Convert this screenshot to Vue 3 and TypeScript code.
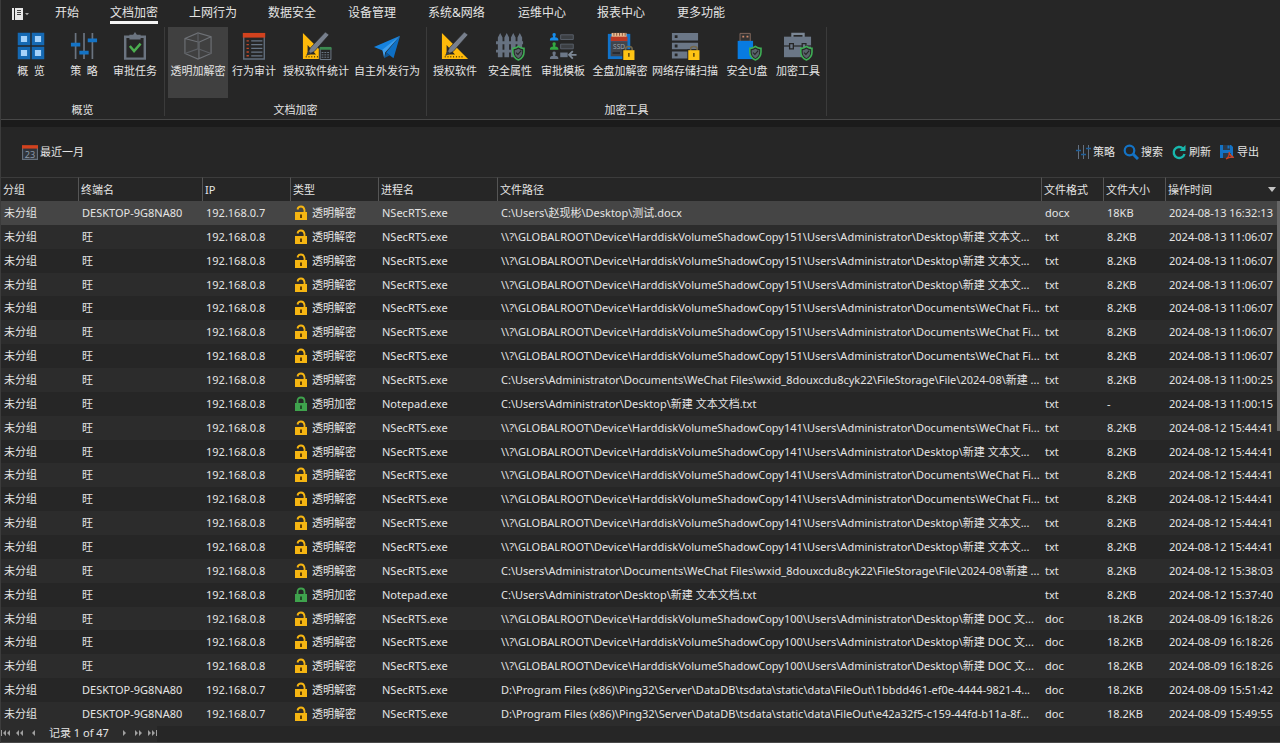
<script setup lang="ts">
import { ref } from 'vue'

interface Tool { label: string; icon: string }
interface Group { name: string; cls: string; tools: Tool[] }
interface Row {
  host: string
  ip: string
  locked: boolean
  proc: string
  path: string
  ext: string
  size: string
  time: string
}

const tabs = ['开始', '文档加密', '上网行为', '数据安全', '设备管理', '系统&网络', '运维中心', '报表中心', '更多功能']
const activeTab = ref('文档加密')
const activeTool = ref('透明加解密')
const selected = ref(0)

const groups: Group[] = [
  {
    name: '概览',
    cls: 'g-overview',
    tools: [
      { label: '概  览', icon: 'tiles' },
      { label: '策  略', icon: 'sliders' },
      { label: '审批任务', icon: 'clipboard' },
    ],
  },
  {
    name: '文档加密',
    cls: 'g-docs',
    tools: [
      { label: '透明加解密', icon: 'cube' },
      { label: '行为审计', icon: 'audit' },
      { label: '授权软件统计', icon: 'rulerStats' },
      { label: '自主外发行为', icon: 'plane' },
    ],
  },
  {
    name: '加密工具',
    cls: 'g-tools',
    tools: [
      { label: '授权软件', icon: 'ruler' },
      { label: '安全属性', icon: 'fence' },
      { label: '审批模板', icon: 'template' },
      { label: '全盘加解密', icon: 'ssd' },
      { label: '网络存储扫描', icon: 'server' },
      { label: '安全U盘', icon: 'usb' },
      { label: '加密工具', icon: 'briefcase' },
    ],
  },
]

const shadow = '\\\\?\\GLOBALROOT\\Device\\HarddiskVolumeShadowCopy'
const admin = '\\Users\\Administrator\\'
const desk = (n: number) => `${shadow}${n}${admin}Desktop\\新建 文本文...`
const chat = (n: number) => `${shadow}${n}${admin}Documents\\WeChat Fi...`
const docs = `${shadow}100${admin}Desktop\\新建 DOC 文...`
const storage = 'C:\\Users\\Administrator\\Documents\\WeChat Files\\wxid_8douxcdu8cyk22\\FileStorage\\File\\2024-08\\新建 ...'
const fileOut = 'D:\\Program Files (x86)\\Ping32\\Server\\DataDB\\tsdata\\static\\data\\FileOut\\'

const dec = (path: string, time: string, ext = 'txt', size = '8.2KB', host = '旺', ip = '192.168.0.8'): Row =>
  ({ host, ip, locked: false, proc: 'NSecRTS.exe', path, ext, size, time })
const enc = (time: string): Row => ({
  host: '旺', ip: '192.168.0.8', locked: true, proc: 'Notepad.exe',
  path: 'C:\\Users\\Administrator\\Desktop\\新建 文本文档.txt', ext: 'txt', size: '-', time,
})
const t1 = '2024-08-13 11:06:07'
const t2 = '2024-08-12 15:44:41'
const t3 = '2024-08-09 16:18:26'

const rows: Row[] = [
  dec('C:\\Users\\赵现彬\\Desktop\\测试.docx', '2024-08-13 16:32:13', 'docx', '18KB', 'DESKTOP-9G8NA80', '192.168.0.7'),
  dec(desk(151), t1),
  dec(desk(151), t1),
  dec(desk(151), t1),
  dec(chat(151), t1),
  dec(chat(151), t1),
  dec(chat(151), t1),
  dec(storage, '2024-08-13 11:00:25'),
  enc('2024-08-13 11:00:15'),
  dec(chat(141), t2),
  dec(desk(141), t2),
  dec(chat(141), t2),
  dec(chat(141), t2),
  dec(desk(141), t2),
  dec(desk(141), t2),
  dec(storage, '2024-08-12 15:38:03'),
  { ...enc('2024-08-12 15:37:40'), size: '8.2KB' },
  dec(docs, t3, 'doc', '18.2KB'),
  dec(docs, t3, 'doc', '18.2KB'),
  dec(docs, t3, 'doc', '18.2KB'),
  dec(fileOut + '1bbdd461-ef0e-4444-9821-4...', '2024-08-09 15:51:42', 'doc', '18.2KB', 'DESKTOP-9G8NA80', '192.168.0.7'),
  dec(fileOut + 'e42a32f5-c159-44fd-b11a-8f...', '2024-08-09 15:49:55', 'doc', '18.2KB', 'DESKTOP-9G8NA80', '192.168.0.7'),
]
</script>

<template>
  <div class="app">
    <nav class="menu">
      <button class="file" type="button" aria-label="菜单">
        <svg width="18" height="14" viewBox="0 0 18 14">
          <path d="M0 1h2v12H0z" fill="#e8e8e8" />
          <path d="M3 1h8v12H3z" fill="#e8e8e8" />
          <path d="M5 3.500h4M5 5.500h4M5 7.500h4" stroke="#444" />
          <path d="M13 6h4l-2 2.300z" fill="#aaa" />
        </svg>
      </button>
      <div class="tabs">
        <button v-for="t in tabs" :key="t" type="button" :class="{ on: t === activeTab }" @click="activeTab = t">{{ t }}</button>
      </div>
    </nav>

    <div class="ribbon">
      <section v-for="g in groups" :key="g.name" class="group" :class="g.cls">
        <div class="tools">
          <button v-for="k in g.tools" :key="k.label" class="tool" :class="{ on: k.label === activeTool }" type="button" @click="activeTool = k.label">
            <svg class="ico" viewBox="0 0 30 30" fill="none">
              <g v-if="k.icon === 'tiles'">
                <g fill="#a5d2fa" stroke="#1569b3" stroke-width="3.400">
                  <path d="M2.500 2.500h10v10h-10zM17.500 2.500h10v10h-10zM2.500 17.500h10v10h-10zM17.500 17.500h10v10h-10z" />
                </g>
              </g>
              <g v-else-if="k.icon === 'sliders'">
                <path d="M6 1v28M15 1v28M24 1v28" stroke="#6b7480" stroke-width="1.800" />
                <path d="M1 11.500h10v4H1zM10 20h10v4H10zM19 7h10v4H19z" fill="#1473c5" />
              </g>
              <g v-else-if="k.icon === 'clipboard'">
                <path d="M4.500 5h21v23.500h-21z" stroke="#6b7480" stroke-width="2.600" />
                <path d="M9 3h4l2-3 2 3h4v5H9z" fill="#6b7480" />
                <path d="M9.500 15l4.500 5.500 7-8" stroke="#4caf50" stroke-width="2.600" />
              </g>
              <g v-else-if="k.icon === 'cube'" stroke="#6e7176" stroke-width="1.200">
                <path d="M1 7l14-6 14 4v18l-14 6L1 23zM1 7l15 4L29 5M16 11v18" />
                <path d="M15 1v17L1 23M15 18l14 5" stroke="#5c5f64" />
              </g>
              <g v-else-if="k.icon === 'audit'">
                <path d="M4 2.500h22v26.500H4z" stroke="#626e7c" stroke-width="1.500" />
                <path d="M3 1h24v5H3z" fill="#d2421e" />
                <path d="M12 9.500h12M12 13.500h12M12 17.500h12M12 21.500h12M12 25.500h12" stroke="#687585" stroke-width="1.300" />
                <path d="M7 9.500h2.500M7 13.500h2.500M7 17.500h2.500M7 21.500h2.500M7 25.500h2.500" stroke="#c2482a" stroke-width="1.500" />
              </g>
              <g v-else-if="k.icon === 'ruler' || k.icon === 'rulerStats'">
                <path d="M1 1v28h28zM6 14l9 10H6z" fill="#ffba0a" fill-rule="evenodd" />
                <path d="M4 26.500h20" stroke="#4c3a0a" stroke-width="1.500" stroke-dasharray="1 2" />
                <path d="M25 0l4 3-16 18-8 4 4-8z" fill="#777f8c" stroke="#262626" stroke-width=".7" />
                <path d="M5 25l2-5 3 3z" fill="#343a43" />
                <g v-if="k.icon === 'rulerStats'">
                  <path d="M18 15h14v15H18z" fill="#262626" />
                  <path d="M19.500 17h11.500v12.500H19.500z" stroke="#72808e" />
                  <path d="M19 16h12.500v3H19z" fill="#3b8a50" />
                  <path d="M21 22h9M21 24.500h9M21 27h9" stroke="#72808e" stroke-dasharray="2 1" />
                </g>
              </g>
              <g v-else-if="k.icon === 'plane'">
                <path d="M1 16L29 4 11 20z" fill="#1683df" />
                <path d="M29 4L22 28l-8-6z" fill="#0e6fc4" />
                <path d="M10 19L29 4 13 22l-1 6z" fill="#3e9fee" />
                <path d="M14 22l4 3-6 3z" fill="#0a5699" />
              </g>
              <g v-else-if="k.icon === 'fence'">
                <path d="M2 6l2.500-5L7 6v21H2zM9 6l2.500-5L14 6v21H9zM16 6l2.500-5L21 6v21h-5zM23 6l2.500-5L28 6v21h-5z" fill="#667180" />
                <path d="M0 10h29v3H0zM0 19h29v3H0z" fill="#667180" />
              </g>
              <g v-else-if="k.icon === 'template'">
                <path d="M1 9V8q0-2 3.500-2.500Q2.500 1 5.500 1T6.500 5.500Q10 6 10 8v1z" fill="#168be8" />
                <path d="M1 19v-1q0-2 3.500-2.500-2-4.500 1-4.500t1 4.500Q10 16 10 18v1z" fill="#32a842" />
                <path d="M1 29v-1q0-2 3.500-2.500-2-4.500 1-4.500t1 4.500Q10 26 10 28v1z" fill="#6c7787" />
                <path d="M12.500 3h13.500v5H12.500zM12.500 13h13.500v5H12.500z" stroke="#5a626d" fill="#3c3f43" />
                <path d="M12 22h8v5h-8z" fill="#6c7787" />
                <path d="M29.500 24.500h-8M25.500 20.500l-4 4 4 4" stroke="#7d8896" stroke-width="2" />
              </g>
              <g v-else-if="k.icon === 'ssd'">
                <path d="M2 2h24v27H2z" fill="#1173ca" />
                <path d="M6 1h16v5H6z" fill="#e9bd93" />
                <path d="M8.500 1v3M11.500 1v3M14.500 1v3M17.500 1v3M20.500 1v3" stroke="#804b35" />
                <path d="M5 5h18v5H5z" fill="#b93822" />
                <path d="M5 10h18v16H5z" fill="#41454b" />
                <text x="14" y="18" class="chip">SSD</text>
                <path d="M7 22.500h8" stroke="#262b31" stroke-width="2" />
              </g>
              <g v-else-if="k.icon === 'server'">
                <path d="M1 1h28v8H1zM1 11.500h28v7H1zM1 21h28v7.500H1z" fill="#6b7787" />
                <path d="M4 3.500h3v3H4zM4 13.500h3v3H4zM4 23h3v3H4z" fill="#262626" />
              </g>
              <g v-else-if="k.icon === 'usb'">
                <path d="M7.500 1.500h11V10h-11z" stroke="#866a5f" fill="#333" />
                <path d="M10 4h2v2h-2zM14.500 4h2v2h-2z" fill="#d0896a" />
                <path d="M5 9.500h16.500V29H5z" fill="#087be0" />
              </g>
              <g v-else-if="k.icon === 'briefcase'">
                <path d="M9 6V2h12v4" stroke="#7b8795" stroke-width="2.400" />
                <path d="M0 5h29v22H0z" fill="#6b7787" />
                <path d="M0 15h29" stroke="#262626" stroke-width="1.300" />
                <path d="M6 12.500h4v5.500H6zM19.500 12.500h4v5.500h-4z" fill="#6b7787" stroke="#262626" stroke-width="1.400" />
              </g>
              <g v-if="['fence', 'usb', 'briefcase'].includes(k.icon)">
                <path d="M24 15.500q3 2.500 6 2v4q0 6-6 8.500-6-2.500-6-8.500v-4q3 .5 6-2z" fill="#262626" stroke="#3fae55" stroke-width="1.700" />
                <path d="M24 18q2 1.500 4 1.500v2.500q0 4-4 6-4-2-4-6v-2.500q2 0 4-1.500z" fill="#59636a" />
                <path d="M21.500 22l2 2 3.500-4" stroke="#262626" stroke-width="1.200" />
              </g>
              <g v-if="['ssd', 'server'].includes(k.icon)">
                <path d="M17.500 18.500h14V31h-14z" fill="#262626" />
                <path d="M21 20v-2q0-2.500 3.500-2.500t3.500 2.500v2" stroke="#74684a" stroke-width="1.700" />
                <path d="M18.500 19.500h12V30h-12z" fill="#ffc414" />
                <path d="M24.500 22.500v4" stroke="#5d4509" stroke-width="1.600" />
              </g>
            </svg>
            <span>{{ k.label }}</span>
          </button>
        </div>
        <div class="caption">{{ g.name }}</div>
      </section>
    </div>

    <main class="panel">
      <div class="bar">
        <button type="button" class="range">
          <svg width="16" height="16" viewBox="0 0 14 14">
            <path d="M.5 2.500h13v11H.5z" fill="#30343a" stroke="#65707d" />
            <path d="M0 1h14v3H0z" fill="#d2421e" />
            <text x="7" y="12" class="day">23</text>
          </svg>
          <span>最近一月</span>
        </button>
        <div class="actions">
          <button type="button">
            <svg width="16" height="16" viewBox="0 0 16 16" fill="none">
              <path d="M3.500 1v14M8.500 1v14M13.500 1v14" stroke="#647080" />
              <path d="M1 6.500h5M6 10.500h5M11 4.500h5" stroke="#1f609c" stroke-width="1.500" />
            </svg><span>策略</span>
          </button>
          <button type="button">
            <svg width="16" height="16" viewBox="0 0 16 16" fill="none" stroke="#1473c5">
              <circle cx="6.500" cy="6.500" r="4.800" stroke-width="2.200" />
              <path d="M10 10l5 5" stroke-width="3" />
            </svg><span>搜索</span>
          </button>
          <button type="button">
            <svg width="16" height="16" viewBox="0 0 16 16" fill="none">
              <path d="M12 4.500A5.500 5.500 0 1 0 13.500 10" stroke="#18b8ad" stroke-width="2.400" />
              <path d="M14.500 1v6h-6z" fill="#18b8ad" />
            </svg><span>刷新</span>
          </button>
          <button type="button">
            <svg width="16" height="16" viewBox="0 0 16 16" fill="none">
              <path d="M1 1h11l2 2v11H1z" fill="#1473c5" />
              <path d="M4 1h7v5H4zM4 9h8v5H4z" fill="#2b3a4b" />
              <path d="M8.500 1.500h2v3h-2z" fill="#1473c5" />
              <path d="M7 15q4-3 3-7 1 4 5 5.500-4-1-8 1.500z" stroke="#d2421e" stroke-width="1.200" />
            </svg><span>导出</span>
          </button>
        </div>
      </div>

      <div class="grid">
        <table>
          <colgroup>
            <col class="c-group" /><col class="c-host" /><col class="c-ip" /><col class="c-ip" /><col class="c-proc" />
            <col /><col class="c-ext" /><col class="c-ext" /><col class="c-time" />
          </colgroup>
          <thead>
            <tr>
              <th>分组</th><th>终端名</th><th>IP</th><th>类型</th><th>进程名</th><th>文件路径</th><th>文件格式</th><th>文件大小</th>
              <th aria-sort="descending"><div class="sorted">操作时间<i class="arrow"></i></div></th>
            </tr>
          </thead>
          <tbody>
            <tr v-for="(r, i) in rows" :key="i" :class="{ sel: i === selected }" @click="selected = i">
              <td>未分组</td>
              <td>{{ r.host }}</td>
              <td>{{ r.ip }}</td>
              <td>
                <div class="kind">
                  <svg width="14" height="16" viewBox="0 0 14 16" fill="none">
                    <template v-if="r.locked">
                      <path d="M3.500 8V5q0-3.500 3.500-3.500T10.500 5v3" stroke="#3fa34d" stroke-width="1.800" />
                      <path d="M1 7h12v8H1z" fill="#3fa34d" />
                      <path d="M7 9.500V13" stroke="#1f4d26" stroke-width="2" />
                    </template>
                    <template v-else>
                      <path d="M3.500 4.500Q4 1.500 7 1.500T10.500 5v3" stroke="#f5b512" stroke-width="1.800" />
                      <path d="M1 7h12v8H1z" fill="#f5b512" />
                      <path d="M7 9.500V13" stroke="#5a3d05" stroke-width="2" />
                    </template>
                  </svg>
                  {{ r.locked ? '透明加密' : '透明解密' }}
                </div>
              </td>
              <td>{{ r.proc }}</td>
              <td>{{ r.path }}</td>
              <td>{{ r.ext }}</td>
              <td>{{ r.size }}</td>
              <td>{{ r.time }}</td>
            </tr>
          </tbody>
        </table>
        <div class="thumb"></div>
      </div>

      <footer class="pager">
        <button type="button" aria-label="第一条"><svg width="10" height="6" viewBox="0 0 10 6"><path d="M0 0h1v6H0zM5 0v6L2 3zM9 0v6L6 3z" /></svg></button>
        <button type="button" aria-label="上一页"><svg width="10" height="6" viewBox="0 0 10 6"><path d="M4 0v6L1 3zM8 0v6L5 3z" /></svg></button>
        <button type="button" aria-label="上一条"><svg width="10" height="6" viewBox="0 0 10 6"><path d="M6 0v6L3 3z" /></svg></button>
        <span class="count">记录 1 of 47</span>
        <button type="button" aria-label="下一条"><svg width="10" height="6" viewBox="0 0 10 6"><path d="M4 0v6l3-3z" /></svg></button>
        <button type="button" aria-label="下一页"><svg width="10" height="6" viewBox="0 0 10 6"><path d="M2 0v6l3-3zM6 0v6l3-3z" /></svg></button>
        <button type="button" aria-label="最后一条"><svg width="10" height="6" viewBox="0 0 10 6"><path d="M1 0v6l3-3zM5 0v6l3-3zM9 0h1v6H9z" /></svg></button>
      </footer>
    </main>
  </div>
</template>

<style>
html,
body {
  background: #262626;
}
body {
  margin: 0;
}
</style>

<style scoped>
.app {
  display: flex;
  flex-direction: column;
  min-height: 100vh;
  box-sizing: border-box;
  border-left: 1px solid #3c3c3c;
  background: #262626;
  color: #e4e4e4;
  font: 11px/16px 'Noto Sans', 'Noto Sans CJK SC', sans-serif;
}
button {
  padding: 0;
  border: 0;
  background: none;
  color: inherit;
  font: inherit;
  white-space: nowrap;
}
svg {
  flex: none;
}
.menu {
  display: flex;
  height: 27px;
  padding-left: 11px;
}
.file {
  width: 43px;
  display: flex;
  align-items: center;
}
.tabs {
  display: grid;
  grid-template-columns: 55px 79px 79px 80px 80px 90px 79px 80px 80px;
  justify-items: start;
  font-size: 12px;
}
.tabs button {
  height: 24px;
  padding-top: 4px;
  box-sizing: border-box;
  border-bottom: 3px solid transparent;
}
.tabs .on {
  border-bottom-color: #f4f4f4;
}
.ribbon {
  display: flex;
  height: 92px;
  border-bottom: 1px solid #474747;
}
.group {
  margin-bottom: 3px;
  border-right: 1px solid #3b3b3b;
}
.tools {
  display: grid;
  height: 71px;
}
.g-overview .tools {
  padding: 0 4px 0 3px;
  grid-template-columns: 54px 52px 50px;
}
.g-docs .tools {
  padding: 0 4px 0 3px;
  grid-template-columns: 60px 52px 72px 70px;
}
.g-tools .tools {
  padding: 0 6px 0 1px;
  grid-template-columns: 54px 56px 50px 64px 66px 58px 44px;
}
.tool {
  display: flex;
  flex-direction: column;
  align-items: center;
  padding-top: 5px;
}
.tool.on {
  background: #404040;
}
.tool span {
  margin-top: 3px;
  white-space: pre;
}
.ico {
  width: 28px;
  height: 28px;
  overflow: visible;
}
.chip {
  font-size: 7px;
  fill: #98a2ae;
  text-anchor: middle;
}
.day {
  font-size: 8px;
  fill: #8b99aa;
  text-anchor: middle;
}
.caption {
  padding-top: 4px;
  text-align: center;
}
.panel {
  flex: 1;
  display: flex;
  flex-direction: column;
  border-top: 7px solid #1b1b1b;
  border-bottom: 1px solid #484848;
}
.bar {
  display: flex;
  justify-content: space-between;
  align-items: center;
  height: 50px;
  padding: 0 21px;
}
.bar button {
  display: flex;
  align-items: center;
  gap: 2px;
}
.actions {
  display: flex;
  gap: 8px;
}
.grid {
  position: relative;
  flex: 1;
  display: flex;
}
table {
  width: 100%;
  table-layout: fixed;
  border-collapse: separate;
  border-spacing: 0;
}
.c-group { width: 77px; }
.c-host { width: 124px; }
.c-ip { width: 88px; }
.c-proc { width: 119px; }
.c-ext { width: 62px; }
.c-time { width: 115px; }
th {
  height: 24px;
  box-sizing: border-box;
  padding: 0 2px;
  border-top: 1px solid #3c3c3c;
  border-left: 1px solid #555;
  font-weight: 400;
  text-align: left;
}
th:first-child {
  border-left: 0;
}
td {
  padding: 0 0 0 4px;
  overflow: hidden;
  white-space: nowrap;
}
td:first-child {
  padding-left: 3px;
}
tbody tr:nth-child(even) {
  background: #2c2c2c;
}
tbody tr.sel {
  background: #454545;
}
.sorted {
  display: flex;
  align-items: center;
  justify-content: space-between;
}
.arrow {
  margin-right: 2px;
  border: 4px solid transparent;
  border-top: 5px solid #c4c4c4;
  border-bottom: 0;
}
.kind {
  display: flex;
  align-items: center;
  gap: 4px;
}
.thumb {
  position: absolute;
  top: 24px;
  right: 0;
  width: 3px;
  height: 230px;
  background: #666;
}
.pager {
  display: flex;
  align-items: center;
  align-self: flex-start;
  gap: 4px;
  height: 14px;
  padding-bottom: 2px;
  background: #2c2c2c;
  fill: #a0a0a0;
}
.pager button {
  display: flex;
}
.count {
  padding: 0 6px;
}
</style>
